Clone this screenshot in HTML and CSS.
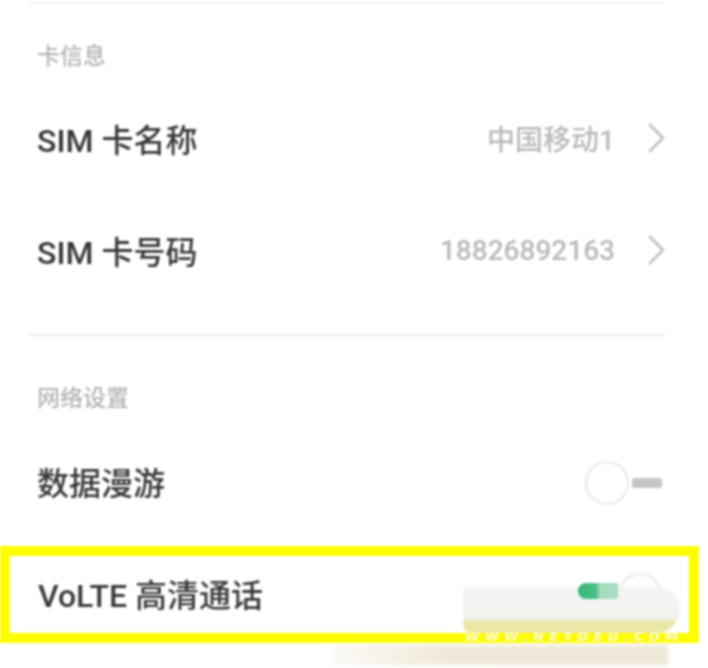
FILE: index.html
```html
<!DOCTYPE html>
<html lang="zh-CN">
<head>
    <meta charset="UTF-8">
    <meta name="viewport" content="width=device-width, initial-scale=1.0">
    <title>SIM 卡信息</title>
    <link rel="stylesheet" href="styles.css">
</head>
<body>
    <div class="screen">
        <div class="rule rule-top"></div>

        <div class="group-title">卡信息</div>
        <div class="item">
            <span class="item-name">SIM 卡名称</span>
            <span class="item-value">中国移动1</span>
            <svg class="chevron" width="18" height="30" viewBox="0 0 18 30">
                <polyline points="3,2 16,15 3,28" />
            </svg>
        </div>
        <div class="item">
            <span class="item-name">SIM 卡号码</span>
            <span class="item-value">18826892163</span>
            <svg class="chevron" width="18" height="30" viewBox="0 0 18 30">
                <polyline points="3,2 16,15 3,28" />
            </svg>
        </div>

        <div class="rule rule-mid"></div>

        <div class="group-title second">网络设置</div>
        <div class="item">
            <span class="item-name">数据漫游</span>
            <span class="switch off">
                <span class="knob"></span>
                <span class="bar"></span>
            </span>
        </div>
        <!-- highlighted row -->
        <div class="item marked">
            <span class="item-name">VoLTE 高清通话</span>
            <span class="switch on">
                <span class="track"></span>
                <span class="knob"></span>
            </span>
        </div>

        <!-- site watermark over the corner -->
        <div class="wm-blob"></div>
        <div class="wm-text">WWW.NETDEU.COM</div>
        <div class="wm-shade"></div>
    </div>
</body>
</html>
```

FILE: styles.css
```css
body {
    margin: 0;
    padding: 0;
    background-color: #fff;
    font-family: Roboto, "Noto Sans CJK SC", sans-serif;
}
.screen {
    position: relative;
    width: 708px;
    height: 668px;
    overflow: hidden;
    background-color: #fff;
    filter: blur(0.8px);
}
.rule {
    height: 2px;
    background-color: #ececec;
}
.rule-top {
    margin: 2px 43px 0 28px;
    background-color: #f2f2f2;
}
.rule-mid {
    margin: 26px 43px 0 28px;
}
.group-title {
    padding: 37px 37px 11px;
    font-size: 23px;
    font-weight: 500;
    line-height: 32px;
    color: #b4b4b4;
}
.group-title.second {
    padding-top: 47px;
    padding-bottom: 12px;
}
.item {
    display: flex;
    align-items: center;
    height: 112px;
    padding: 0 43px 0 37px;
    box-sizing: border-box;
}
.item-name {
    flex: 1;
    font-size: 32px;
    font-weight: 500;
    color: #383838;
    margin-top: -4px;
}
.item-value {
    margin-right: 32px;
    font-size: 28px;
    font-weight: 500;
    color: #b9b9b9;
    margin-top: -4px;
}
.chevron {
    margin-top: -4px;
}
.chevron polyline {
    fill: none;
    stroke: #c2c2c2;
    stroke-width: 2.8;
    stroke-linecap: round;
    stroke-linejoin: round;
}
.switch {
    display: flex;
    align-items: center;
    margin-right: 3px;
}
.switch .knob {
    width: 40px;
    height: 40px;
    border: 2px solid #e8e8e8;
    border-radius: 50%;
    background-color: #fff;
}
.switch.off .bar {
    width: 30px;
    height: 10px;
    margin-left: 3px;
    border-radius: 2px;
    background-color: #c6c6c6;
}
.switch.on {
    margin-right: 0;
}
.switch.on .track {
    position: relative;
    z-index: 1;
    width: 40px;
    height: 16px;
    margin-top: -8px;
    border-radius: 9px 2px 2px 9px;
    background: linear-gradient(to right, #36b676, #4cc088 45%, #a6dcc0 55%, #a8ddc2);
}
.switch.on .knob {
    border-color: #f2e4e7;
}
.item.marked {
    height: 97px;
    margin: 7px 9px 0 0;
    padding: 0 27px 0 28px;
    border: 10px solid #fdfd00;
}

/* watermark pieces */
.wm-blob {
    position: absolute;
    left: 463px;
    top: 587px;
    width: 217px;
    height: 46px;
    border-radius: 4px 22px 24px 8px;
    background: linear-gradient(#f4f4f2 0, #f3f3f0 68%, #ebe8a8 76%, #ebe8a6 100%);
}
.wm-text {
    position: absolute;
    left: 465px;
    top: 630px;
    width: 220px;
    font-family: "DejaVu Sans", sans-serif;
    font-size: 13px;
    font-weight: bold;
    font-style: italic;
    letter-spacing: 5.3px;
    line-height: 14px;
    color: #fbf9dc;
}
.wm-shade {
    position: absolute;
    left: 330px;
    top: 645px;
    width: 338px;
    height: 20px;
    background: linear-gradient(to right, rgba(240, 232, 214, 0.2), #f0e8d9 35%, #efe7d7);
    filter: blur(2px);
}
```
